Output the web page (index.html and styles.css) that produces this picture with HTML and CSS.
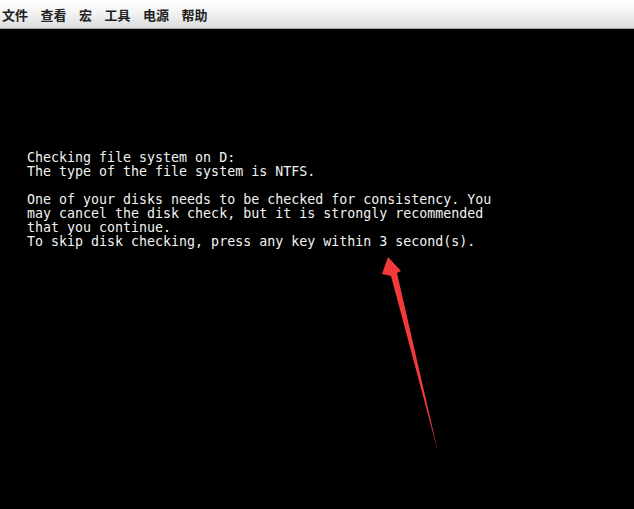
FILE: index.html
```html
<!DOCTYPE html>
<html lang="zh-CN">
<head>
    <meta charset="UTF-8">
    <title>磁盘检查</title>
    <link rel="stylesheet" href="styles.css">
</head>
<body>
    <div class="menu-bar">
        <span class="menu-item">文件</span>
        <span class="menu-item">查看</span>
        <span class="menu-item">宏</span>
        <span class="menu-item">工具</span>
        <span class="menu-item">电源</span>
        <span class="menu-item">帮助</span>
    </div>

    <div class="screen">
<pre class="console">Checking file system on D:
The type of the file system is NTFS.

One of your disks needs to be checked for consistency. You
may cancel the disk check, but it is strongly recommended
that you continue.
To skip disk checking, press any key within 3 second(s).</pre>

        <svg class="arrow" width="634" height="480" viewBox="0 29 634 480">
            <polygon points="388,257 401,271 397,273 438,452 391,276 382,274" fill="#f23a3a"/>
        </svg>
    </div>
</body>
</html>
```

FILE: styles.css
```css
* {
    box-sizing: border-box;
    margin: 0;
    padding: 0;
}

body {
    background: #000;
    width: 634px;
    height: 509px;
    overflow: hidden;
}

.menu-bar {
    height: 29px;
    display: flex;
    align-items: center;
    gap: 12.5px;
    padding: 1px 0 0 2px;
    background: linear-gradient(to bottom, #ffffff 0%, #f3f3f3 45%, #dcdcdc 100%);
    border-bottom: 1px solid #a8a8a8;
    font-family: "Noto Sans CJK SC", sans-serif;
    font-size: 13px;
    font-weight: bold;
    color: #222;
}

.screen {
    position: relative;
    height: 480px;
    padding: 122px 0 0 27px;
}

.console {
    font-family: "DejaVu Sans Mono", monospace;
    font-size: 13.3px;
    line-height: 14px;
    color: #f2f2f2;
}

.arrow {
    position: absolute;
    top: 0;
    left: 0;
}
```
